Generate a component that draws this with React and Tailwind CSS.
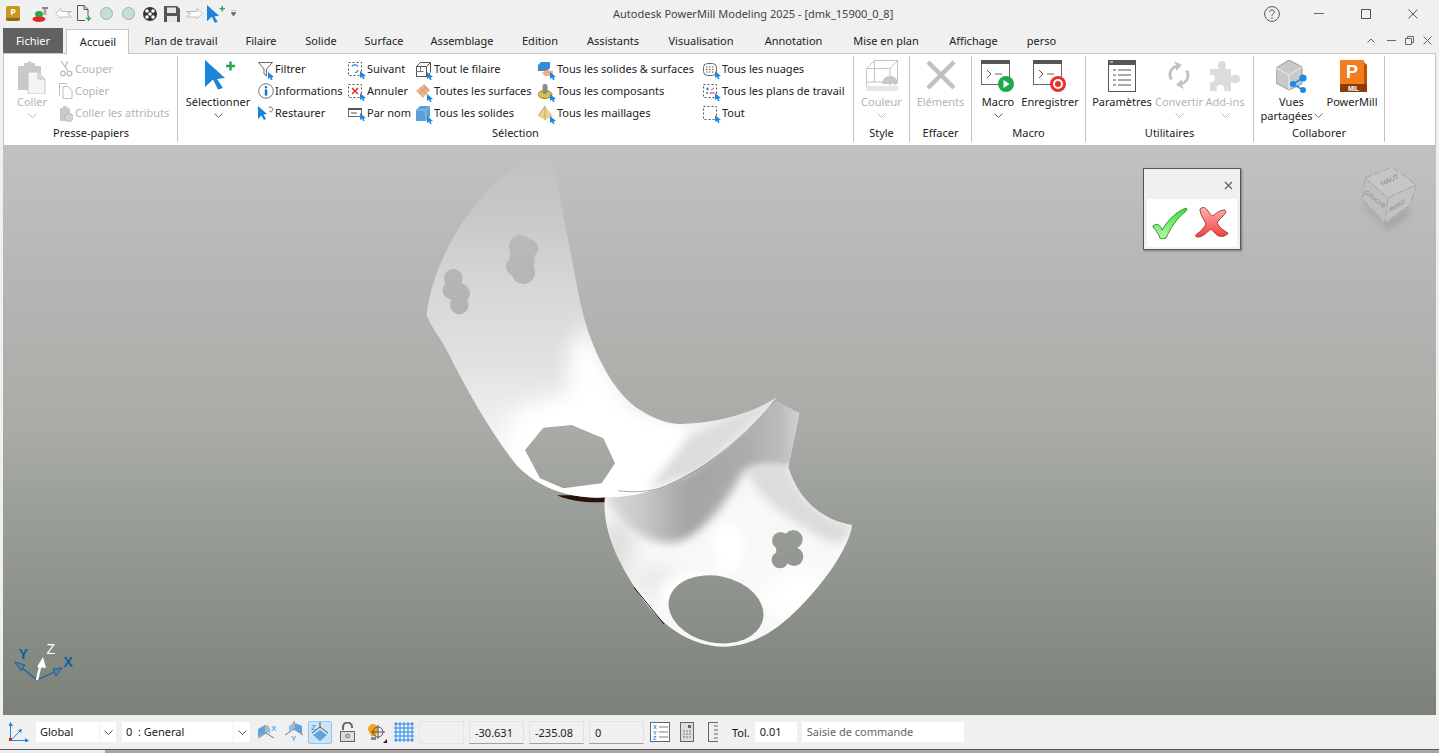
import React from "react";

const Pt = () => (
  <svg width="7" height="8" viewBox="0 0 7 8" className="absolute right-[0px] bottom-[-3px]">
    <path d="M0 0L6 5L3.6 5.4L4.6 8L3 8L2 5.8L0 7Z" fill="#1e88e5" />
  </svg>
);

const Cursor = ({ s = 1 }) => (
  <svg width={30 * s} height={30 * s} viewBox="0 0 30 30">
    <path d="M0 0L20 18L12 19L18 28L13 29.5L8 19.5L0 27Z" fill="#1a84d8" />
    <path d="M21 6h9M25.5 1.5v9" stroke="#22a84a" strokeWidth="2.4" fill="none" />
  </svg>
);

const Chev = ({ c = "#777" }) => (
  <svg width="9" height="5" viewBox="0 0 9 5"><path d="M.5.5L4.5 4.5L8.5.5" stroke={c} fill="none" /></svg>
);

const Clipboard = () => (
  <svg width="30" height="34" viewBox="0 0 30 34">
    <path d="M1 6h6V3h3l2-2h1l2 2h3v3h6v24H1Z" fill="#c9c9c9" />
    <path d="M11 12h10l7 7v15H11Z" fill="#f4f4f4" stroke="#c4c4c4" />
    <path d="M21 12v7h7" fill="#ddd" stroke="#c4c4c4" />
  </svg>
);

const g = "#bdbdbd";
const Ico = {
  cut: <svg width="14" height="16" viewBox="0 0 14 16"><path d="M2 0L9 10M9 0L6 6" stroke={g} strokeWidth="1.3" fill="none" /><circle cx="4" cy="12.5" r="2.3" stroke={g} fill="none" strokeWidth="1.3" /><circle cx="10.5" cy="12.5" r="2.3" stroke={g} fill="none" strokeWidth="1.3" /></svg>,
  copy: <svg width="14" height="16" viewBox="0 0 14 16"><path d="M.5 12.5V.5H7L8 2" stroke={g} fill="none" /><path d="M4 3.5h5l4 4v8H4Z" fill="#fff" stroke={g} /></svg>,
  attr: <svg width="14" height="17" viewBox="0 0 14 17"><path d="M1 3h3V1h4v2h3v13H1Z" fill="#c9c9c9" /><circle cx="10" cy="12.5" r="4" fill="#d5d5d5" stroke="#bbb" /></svg>,
  filter: <svg width="15" height="15" viewBox="0 0 15 15"><path d="M.5.5h14L8.500 7v7l-2.500-2V7Z" fill="#fff" stroke="#666" /></svg>,
  info: <svg width="16" height="16" viewBox="0 0 16 16"><circle cx="8" cy="8" r="7.3" fill="#fff" stroke="#777" /><circle cx="8" cy="4.3" r="1.2" fill="#1673c8" /><rect x="6.8" y="6.4" width="2.4" height="6.2" fill="#1673c8" /></svg>,
  rest: <svg width="16" height="16" viewBox="0 0 16 16"><path d="M0 1L9 9L5.5 9.5L8 14L6 15L3.5 10.5L0 14Z" fill="#1a84d8" /><path d="M10.5 3a2.4 2.4 0 1 1 1 3.6" stroke="#777" fill="none" /></svg>,
  next: <svg width="14" height="14" viewBox="0 0 14 14"><rect x=".5" y=".5" width="13" height="13" fill="none" stroke="#555" strokeDasharray="2 2" /><path d="M4 4a4 4 0 0 1 6 .5M10 8a3 3 0 0 1-3 2.500" stroke="#1a84d8" fill="none" strokeWidth="1.2" /></svg>,
  undo: <svg width="14" height="14" viewBox="0 0 14 14"><rect x=".5" y=".5" width="13" height="13" fill="none" stroke="#555" strokeDasharray="2 2" /><path d="M4 4l6 6M10 4l-6 6" stroke="#e02020" strokeWidth="1.4" /></svg>,
  name: <svg width="14" height="10" viewBox="0 0 14 10"><rect x=".5" y=".5" width="13" height="8" fill="#fff" stroke="#666" /><rect x="0" y="0" width="14" height="2" fill="#555" /><path d="M3 5h6" stroke="#555" /></svg>,
  wire: <svg width="15" height="15" viewBox="0 0 15 15"><path d="M.5 4.500h10v10H.5ZM.5 4.500l4-4h10v10l-4 4M10.5 4.500l4-4" fill="none" stroke="#555" /><path d="M4.500 4.500v5h-4M4.500 9.500h3" stroke="#777" fill="none" /></svg>,
  surf: <svg width="15" height="15" viewBox="0 0 15 15"><path d="M0 7L8 0L14 6L7 14Z" fill="#eab58c" /><path d="M4 3.500l7 7M8 1l5 6M3 10l7-7" stroke="#d08a58" strokeWidth=".8" /></svg>,
  solid: <svg width="14" height="15" viewBox="0 0 14 15"><path d="M0 4L4 0H14V10L10 15H0Z" fill="#5a9fd9" /><path d="M0 4H10V15M10 4L14 0" stroke="#93c3ea" fill="none" /></svg>,
  solsurf: <svg width="15" height="15" viewBox="0 0 15 15"><path d="M0 3L3 0H12V6L9 9H0Z" fill="#3a8ad4" /><path d="M4 11L8 8L15 9V14H7Z" fill="#f0ae88" /></svg>,
  comp: <svg width="15" height="15" viewBox="0 0 15 15"><ellipse cx="7" cy="10.500" rx="7" ry="4" fill="#dcc04f" stroke="#9a842a" /><rect x="4.500" y="0" width="5" height="10" rx="2" fill="#8b8b8b" /></svg>,
  mesh: <svg width="15" height="15" viewBox="0 0 15 15"><path d="M7 0L15 10L7 14L0 10Z" fill="#ead08e" /><path d="M7 0V14M7 0L0 10" stroke="#c9a964" fill="none" /></svg>,
  cloud: <svg width="14" height="13" viewBox="0 0 14 13"><rect x=".5" y=".5" width="13" height="12" rx="4" fill="#fff" stroke="#666" /><path d="M3 4h9M3 6.5h9M3 9h9" stroke="#555" strokeDasharray="1.5 1.5" /></svg>,
  plane: <svg width="14" height="14" viewBox="0 0 14 14"><rect x=".5" y=".5" width="13" height="13" fill="none" stroke="#555" strokeDasharray="2 2" /><path d="M3 5h3M4.5 3.5v3" stroke="#1a84d8" /><path d="M8 6l3-2" stroke="#27a04a" /><rect x="3" y="8" width="2" height="2" fill="#999" /><path d="M6.500 9h5" stroke="#e02020" /></svg>,
  all: <svg width="14" height="14" viewBox="0 0 14 14"><rect x=".5" y=".5" width="13" height="13" fill="none" stroke="#555" strokeDasharray="2 2" /></svg>,
};

const Small = ({ ico, box, text, dim, pt = true }) => (
  <div className="flex items-center h-[22px]">
    <div className={`relative flex items-center shrink-0 ${box}`}>
      {ico}
      {pt && <Pt />}
    </div>
    <span className={`whitespace-nowrap ${dim ? "text-[#b4b4b4]" : "text-[#222]"}`}>{text}</span>
  </div>
);

const Large = ({ w, icon, label, label2, chev, dim }) => (
  <div className={`flex flex-col items-center shrink-0 ${w}`}>
    <div className="h-[38px] pt-[4px] flex items-start justify-center">{icon}</div>
    <div className={`h-[16px] leading-[16px] whitespace-nowrap ${dim ? "text-[#b4b4b4]" : "text-[#222]"}`}>{label}</div>
    {label2 && <div className="h-[13px] -mt-[1px] leading-[13px] whitespace-nowrap flex items-center gap-[1px] text-[#222]">{label2}<Chev /></div>}
    {chev && <div className="h-[8px] mt-[1px] flex items-center justify-center"><Chev c={dim ? "#bbb" : "#666"} /></div>}
  </div>
);

const Group = ({ w, label, children }) => (
  <div className={`flex flex-col h-[86px] mt-[2px] border-r border-[#c4c4c4] shrink-0 ${w}`}>
    <div className="h-[69px] flex">{children}</div>
    <div className="h-[17px] leading-[15px] text-center text-[#222]">{label}</div>
  </div>
);

const Col = ({ w, children }) => <div className={`flex flex-col pt-[2px] shrink-0 ${w}`}>{children}</div>;

const MacroIcon = ({ rec }) => (
  <svg width="34" height="33" viewBox="0 0 34 33">
    <rect x=".5" y=".5" width="28" height="24" fill="#fff" stroke="#666" />
    <rect x="0" y="0" width="29" height="4" fill="#555" />
    <path d="M6 10l4 4l-4 4" stroke="#555" fill="none" />
    <path d="M14 14h7" stroke="#666" />
    {rec ? (
      <><circle cx="25" cy="24" r="8" fill="#ee2d2d" /><circle cx="25" cy="24" r="5" fill="#fff" /><circle cx="25" cy="24" r="3" fill="#ee2d2d" /></>
    ) : (
      <><circle cx="25" cy="24" r="8" fill="#22a84a" /><path d="M22.5 20l6 4l-6 4Z" fill="#fff" /></>
    )}
  </svg>
);

const tabs = [
  ["Plan de travail", "w-[100px]"], ["Filaire", "w-[60px]"], ["Solide", "w-[60px]"], ["Surface", "w-[66px]"],
  ["Assemblage", "w-[90px]"], ["Edition", "w-[66px]"], ["Assistants", "w-[80px]"], ["Visualisation", "w-[96px]"],
  ["Annotation", "w-[89px]"], ["Mise en plan", "w-[96px]"], ["Affichage", "w-[79px]"], ["perso", "w-[57px]"],
];

const Field = ({ w, children }) => (
  <div className={`h-[23px] leading-[22px] pl-[5px] bg-[#f0f0f0] border border-[#e2e2e2] border-b-[#a0a0a0] text-[#222] shrink-0 ${w}`}>{children}</div>
);

const Select = ({ w, cw, children }) => (
  <div className="flex h-[20px] shrink-0">
    <div className={`bg-white leading-[20px] pl-[4px] whitespace-pre text-[#222] ${w}`}>{children}</div>
    <div className={`bg-white ml-[1px] flex items-center justify-center ${cw}`}><Chev c="#555" /></div>
  </div>
);

function Model() {
  const D1 = "M80 495C95 350 200 130 410 2L455 2C470 100 495 220 520 350C535 430 545 480 560 530C585 610 640 730 720 780C760 805 800 822 840 822C940 820 1050 795 1130 742C1060 830 960 920 860 975C780 1020 700 1042 620 1042C510 1050 410 1010 350 945C280 860 205 730 140 600C115 555 90 525 80 495Z";
  const D2 = "M615 1040C700 1042 800 1020 900 960C960 920 1010 870 1040 830L1130 755L1198 790L1165 950C1190 1040 1260 1110 1356 1125C1350 1180 1290 1280 1200 1370C1160 1410 1080 1490 970 1490C870 1490 770 1420 710 1320C650 1230 605 1130 615 1040Z";
  return (
    <svg width="480" height="510" viewBox="0 0 1440 1530" className="absolute left-[397px] top-[5px]">
      <defs>
        <linearGradient id="s1" gradientUnits="userSpaceOnUse" x1="0" y1="0" x2="0" y2="1000">
          <stop offset="0" stopColor="#c0c0c0" />
          <stop offset=".2" stopColor="#c8c8c8" />
          <stop offset=".4" stopColor="#d6d6d6" />
          <stop offset=".65" stopColor="#e2e2e2" />
          <stop offset=".82" stopColor="#f0f0f0" />
          <stop offset="1" stopColor="#ffffff" />
        </linearGradient>
        <linearGradient id="cav" gradientUnits="userSpaceOnUse" x1="620" y1="0" x2="1200" y2="0">
          <stop offset="0" stopColor="#dadada" />
          <stop offset=".2" stopColor="#c6c6c6" />
          <stop offset=".42" stopColor="#a4a4a4" />
          <stop offset=".72" stopColor="#acacac" />
          <stop offset=".9" stopColor="#bcbcbc" />
          <stop offset="1" stopColor="#d2d2d2" />
        </linearGradient>
        <filter id="b1" x="-50%" y="-50%" width="200%" height="200%"><feGaussianBlur stdDeviation="30" /></filter>
        <filter id="b2" x="-50%" y="-50%" width="200%" height="200%"><feGaussianBlur stdDeviation="14" /></filter>
        <mask id="m1" maskUnits="userSpaceOnUse" x="0" y="0" width="1440" height="1530">
          <rect width="1440" height="1530" fill="#fff" />
          <g fill="#000">
            <circle cx="160" cy="385" r="28" /><circle cx="182" cy="430" r="28" /><circle cx="178" cy="465" r="28" /><circle cx="156" cy="420" r="28" /><circle cx="170" cy="425" r="30" />
            <circle cx="362" cy="290" r="35" /><circle cx="388" cy="295" r="27" /><circle cx="370" cy="367" r="35" /><circle cx="346" cy="350" r="28" /><ellipse cx="366" cy="330" rx="38" ry="50" />
            <path d="M430 833L515 825L610 865L645 940L605 1000L490 1015L420 985L375 900Z" />
          </g>
        </mask>
        <mask id="m2" maskUnits="userSpaceOnUse" x="0" y="0" width="1440" height="1530">
          <rect width="1440" height="1530" fill="#fff" />
          <g fill="#000">
            <circle cx="1142" cy="1172" r="26" /><circle cx="1180" cy="1168" r="28" /><circle cx="1182" cy="1220" r="28" /><circle cx="1140" cy="1230" r="25" /><circle cx="1160" cy="1198" r="32" />
            <ellipse cx="948" cy="1378" rx="144" ry="100" transform="rotate(12 948 1378)" />
          </g>
        </mask>
        <clipPath id="c1"><path d={D1} /></clipPath>
        <clipPath id="c2"><path d={D2} /></clipPath>
      </defs>
      <path d="M470 1036C530 1060 580 1058 625 1056L625 1036Z" fill="#2a120a" />
      <g mask="url(#m2)">
        <path d={D2} fill="#f8f8f8" />
        <g clipPath="url(#c2)">
          <ellipse cx="650" cy="1190" rx="50" ry="90" fill="#dedede" filter="url(#b1)" />
          <ellipse cx="760" cy="1290" rx="70" ry="40" fill="#e8e8e8" filter="url(#b1)" />
          <path d="M600 1010C650 1110 720 1178 810 1178C880 1178 960 1090 1030 965C1090 945 1140 950 1170 955L1210 770L1130 740L1040 820L860 970Z" fill="url(#cav)" filter="url(#b2)" />
          <path d="M1040 830L1130 755L1200 790L1170 935L1150 940L1060 920Z" fill="url(#cav)" />
          <path d="M1040 960C1090 935 1140 945 1170 960C1200 1040 1260 1110 1360 1125C1340 1190 1300 1190 1260 1160C1150 1100 1080 1050 1040 960Z" fill="#dcdcdc" filter="url(#b2)" />
          <ellipse cx="985" cy="1190" rx="45" ry="80" fill="#fff" filter="url(#b2)" />
          <ellipse cx="1200" cy="1340" rx="110" ry="80" fill="#fff" filter="url(#b1)" />
          <ellipse cx="890" cy="1330" rx="110" ry="60" fill="#fff" filter="url(#b2)" />
        </g>
      </g>
      <path d="M702 1312L792 1422" stroke="#2a120a" strokeWidth="3" />
      <g mask="url(#m1)">
        <path d={D1} fill="url(#s1)" />
        <g clipPath="url(#c1)">
          <path d="M555 520C510 580 490 660 510 730C420 750 340 770 320 820L340 920L400 1060L800 1020L860 840L700 790Z" fill="#fff" filter="url(#b1)" />
          <path d="M520 760C560 770 620 800 860 840L800 1020L420 1040L330 880Z" fill="#fff" filter="url(#b2)" />
          <path d="M870 860L1140 735L900 970L740 1020Z" fill="#dcdcdc" filter="url(#b2)" />
        </g>
        <path d="M655 1022C700 1028 740 1026 790 1012" stroke="#a8a8a8" strokeWidth="3" fill="none" />
      </g>
    </svg>
  );
}

function Triad() {
  const font = "Liberation Sans, sans-serif";
  return (
    <svg width="70" height="60" viewBox="0 0 70 60" className="absolute left-[7px] top-[490px]">
      <path d="M27 45L5 27M27 45L51 34" stroke="#1f5f9f" strokeWidth="1.2" />
      <path d="M5 27L15 30L11 36Z M52 33L43 34L46 41Z" fill="#5c7f99" stroke="#1f5f9f" />
      <path d="M27 45L31 28" stroke="#fff" strokeWidth="2.4" />
      <path d="M33 22L36 33L27 32Z" fill="#fff" />
      <text x="8.500" y="24" fontSize="14" fontWeight="700" fill="#0f5ea8" fontFamily={font}>Y</text>
      <text x="36.500" y="19" fontSize="14" fontWeight="400" fill="#fff" fontFamily={font}>Z</text>
      <text x="53.500" y="32" fontSize="14" fontWeight="700" fill="#0f5ea8" fontFamily={font}>X</text>
    </svg>
  );
}

function Cube() {
  const font = "Liberation Sans, sans-serif";
  return (
    <svg width="64" height="70" viewBox="0 0 64 70" className="absolute left-[1355px] top-[17px]">
      <defs>
        <filter id="cs" x="-30%" y="-30%" width="160%" height="160%"><feGaussianBlur stdDeviation="3" /></filter>
      </defs>
      <path d="M5 38L27 61L52 43L50 55L30 68L8 48Z" fill="#8d8d8d" opacity=".5" filter="url(#cs)" />
      <path d="M7 16L34 5L58 23L30 36Z" fill="#c6c6c6" stroke="#a4a4a4" strokeDasharray="7 3" />
      <path d="M7 16L30 36L27 61L5 38Z" fill="#c0c0c0" stroke="#a4a4a4" strokeDasharray="7 3" />
      <path d="M30 36L58 23L52 43L27 61Z" fill="#c3c3c3" stroke="#a4a4a4" strokeDasharray="7 3" />
      <text x="24" y="24" fontSize="7" fill="#858585" transform="rotate(-24 24 24)" fontFamily={font}>HAUT</text>
      <text x="6" y="31" fontSize="6" fill="#8c8c8c" transform="rotate(38 6 31)" fontFamily={font}>GAUCHE</text>
      <text x="32" y="50" fontSize="6" fill="#8c8c8c" transform="rotate(-30 32 50)" fontFamily={font}>AVANT</text>
    </svg>
  );
}

function Dialog() {
  return (
    <div className="absolute left-[1140px] top-[23px] w-[98px] h-[82px] bg-[#f0f0f0] border border-[#555] shadow-[1px_1px_2px_rgba(0,0,0,0.35)] flex flex-col">
      <div className="h-[30px] flex justify-end items-center pr-[7px] pt-[2px]">
        <svg width="9" height="9" viewBox="0 0 9 9"><path d="M1 1l7 7M8 1l-7 7" stroke="#666" strokeWidth="1.4" /></svg>
      </div>
      <div className="mx-[3px] h-[48px] bg-white flex items-center pl-[5px] gap-[7px]">
        <svg width="36" height="34" viewBox="0 0 36 34">
          <defs>
            <linearGradient id="gk" x1="0" y1="0" x2="0" y2="1"><stop offset="0" stopColor="#2fe82f" /><stop offset="1" stopColor="#b9f7a8" /></linearGradient>
            <linearGradient id="rk" x1="0" y1="0" x2="0" y2="1"><stop offset="0" stopColor="#ffb0b0" /><stop offset="1" stopColor="#fb3c3c" /></linearGradient>
          </defs>
          <path d="M1 20C4 17 8 18 10 24C16 14 24 6 34 2C35 3 35 4 34 5C24 13 18 23 14 32C11 33 9 33 8 32C6 27 4 24 1 21Z" fill="url(#gk)" stroke="#2c7d2c" strokeWidth=".9" />
        </svg>
        <svg width="34" height="34" viewBox="0 0 34 34">
          <path d="M5 3C8 0 11 2 13 5C15 8 16 9 18 10C21 7 25 4 30 4C32 6 30 8 27 11C25 13 23 15 22 17C25 22 29 25 33 27C32 30 27 31 24 30C21 29 18 25 16 23C12 26 8 31 3 31C0 31 0 29 2 28C6 25 9 22 11 18C9 13 5 9 5 3Z" fill="url(#rk)" stroke="#8a3a3a" strokeWidth=".9" />
        </svg>
      </div>
    </div>
  );
}

const sFont = "Liberation Sans, sans-serif";

export default function App() {
  return (
    <div className="w-[1439px] h-[753px] overflow-hidden flex flex-col bg-[#f0f0f0] text-[11px] text-[#222] font-['Noto_Sans',sans-serif]">
      {/* title bar */}
      <div className="h-[27px] flex items-center relative shrink-0">
        <div className="flex items-center pl-[6px] h-full">
          <div className="w-[14px] h-[15px] rounded-[2px] bg-[#c8971c] text-white text-[9px] font-bold leading-[12px] text-center border-b-[3px] border-[#8a6a10]">P</div>
          <div className="w-[26px] ml-[7px] flex justify-center">
            <svg width="16" height="16" viewBox="0 0 16 16"><ellipse cx="7" cy="13" rx="6.5" ry="3" fill="#e02525" /><ellipse cx="7" cy="8" rx="4" ry="3" fill="#2aa845" /><rect x="10" y="1" width="6" height="2" fill="#888" /><rect x="11.5" y="3" width="3" height="6" fill="#aaa" /></svg>
          </div>
          <div className="w-[20px] flex justify-center">
            <svg width="17" height="11" viewBox="0 0 17 11"><path d="M.5 5.5L6 .5V3.5H16.5L12 5.5L16.5 9H6V10.5Z" fill="#fff" stroke="#bbb" /></svg>
          </div>
          <div className="w-[22px] flex justify-center">
            <svg width="15" height="17" viewBox="0 0 15 17"><path d="M.5.5H7L11 4.5V11M.5.5V15.5H8" fill="none" stroke="#555" /><path d="M7 .5V4.5H11" fill="none" stroke="#555" /><path d="M9 13.5h5M11.5 11v5" stroke="#22a84a" strokeWidth="1.5" /></svg>
          </div>
          {[0, 1].map((i) => (
            <div key={i} className="w-[22px] flex justify-center"><div className="w-[13px] h-[13px] rounded-full bg-[#c6dfd2] border border-[#9bb5a8]" /></div>
          ))}
          <div className="w-[22px] flex justify-center">
            <svg width="14" height="14" viewBox="0 0 14 14"><circle cx="7" cy="7" r="7" fill="#333" /><circle cx="4" cy="4" r="1.8" fill="#fff" /><circle cx="10" cy="4" r="1.8" fill="#fff" /><circle cx="4" cy="10" r="1.8" fill="#fff" /><circle cx="10" cy="10" r="1.8" fill="#fff" /><circle cx="7" cy="7" r="1.8" fill="#fff" /></svg>
          </div>
          <div className="w-[22px] flex justify-center">
            <svg width="16" height="16" viewBox="0 0 16 16"><path d="M0 0H13L16 3V16H0Z" fill="#555" /><rect x="3" y="1.500" width="9" height="5.500" fill="#e6e6e6" /><rect x="3" y="10" width="10" height="6" fill="#e6e6e6" /></svg>
          </div>
          <div className="w-[22px] flex justify-center">
            <svg width="17" height="11" viewBox="0 0 17 11"><path d="M16.5 5.5L11 .5V3.5H.5L5 5.5L.5 9H11V10.5Z" fill="#fff" stroke="#bbb" /></svg>
          </div>
          <div className="w-[22px] flex justify-center"><Cursor s={0.6} /></div>
          <div className="w-[12px] flex justify-center">
            <svg width="5" height="7" viewBox="0 0 5 7"><path d="M0 0h5M0 2.5h5l-2.5 3.5Z" stroke="#666" fill="#666" strokeWidth=".6" /></svg>
          </div>
        </div>
        <div className="absolute left-[613px] top-[6px] leading-[15px] text-[#444] whitespace-nowrap">Autodesk PowerMill Modeling 2025 - [dmk_15900_0_8]</div>
        <div className="ml-auto flex items-center">
          <svg width="16" height="16" viewBox="0 0 16 16" className="mr-[34px]"><circle cx="8" cy="8" r="7.4" fill="none" stroke="#555" /><path d="M5.8 6a2.2 2.2 0 1 1 3.4 1.8C8.3 8.4 8 8.8 8 10" stroke="#555" fill="none" /><circle cx="8" cy="12" r=".8" fill="#555" /></svg>
          <svg width="10" height="1" viewBox="0 0 10 1" className="mr-[37px]"><path d="M0 .5h10" stroke="#666" /></svg>
          <svg width="10" height="10" viewBox="0 0 10 10" className="mr-[37px]"><rect x=".5" y=".5" width="9" height="9" fill="none" stroke="#555" /></svg>
          <svg width="10" height="10" viewBox="0 0 10 10" className="mr-[21px]"><path d="M.5.5l9 9M9.5.5l-9 9" stroke="#555" /></svg>
        </div>
      </div>

      {/* tabs */}
      <div className="h-[26px] flex items-start shrink-0 relative">
        <div className="ml-[3px] mt-[1px] pt-[2px] w-[60px] h-[25px] bg-[#616161] text-white flex items-center justify-center">Fichier</div>
        <div className="ml-[3px] mt-[2px] pl-[1px] w-[63px] h-[25px] bg-white border-x border-t border-[#c6c6c6] flex items-center justify-center z-10">Accueil</div>
        <div className="ml-[2px] flex h-full">
          {tabs.map(([t, w]) => (
            <div key={t} className={`flex items-center justify-center whitespace-nowrap text-[#222] pt-[2px] ${w}`}>{t}</div>
          ))}
        </div>
        <div className="ml-auto mr-[7px] h-full flex items-center gap-[6px] pt-[1px]">
          <svg width="8" height="5" viewBox="0 0 8 5" className="mr-[6px]"><path d="M.5 4.5L4 1L7.5 4.5" stroke="#666" fill="none" /></svg>
          <svg width="9" height="1" viewBox="0 0 9 1" className="mr-[3px]"><path d="M0 .5h9" stroke="#666" /></svg>
          <svg width="9" height="9" viewBox="0 0 9 9" className="mr-[3px]"><path d="M.5 2.5h6v6h-6ZM2.5 2.5v-2h6v6h-2" stroke="#666" fill="none" /></svg>
          <svg width="9" height="9" viewBox="0 0 9 9"><path d="M.5.5l8 8M8.5.5l-8 8" stroke="#666" /></svg>
        </div>
      </div>

      {/* ribbon */}
      <div className="h-[92px] mx-[3px] bg-white border-x border-t border-[#c6c6c6] flex shrink-0">
        <Group w="w-[174px] pl-[1px]" label="Presse-papiers">
          <Large w="w-[54px]" icon={<Clipboard />} label="Coller" chev dim />
          <Col w="w-[110px]">
            <Small dim pt={false} ico={Ico.cut} box="w-[16px]" text="Couper" />
            <Small dim pt={false} ico={Ico.copy} box="w-[16px]" text="Copier" />
            <Small dim pt={false} ico={Ico.attr} box="w-[16px]" text="Coller les attributs" />
          </Col>
        </Group>
        <Group w="w-[676px]" label="Sélection">
          <Large w="w-[80px]" icon={<div className="pl-[3px]"><Cursor /></div>} label="Sélectionner" chev />
          <Col w="w-[90px]">
            <Small ico={Ico.filter} box="w-[17px]" text="Filtrer" />
            <Small pt={false} ico={Ico.info} box="w-[17px]" text="Informations" />
            <Small pt={false} ico={Ico.rest} box="w-[17px]" text="Restaurer" />
          </Col>
          <Col w="w-[67px]">
            <Small ico={Ico.next} box="w-[19px]" text="Suivant" />
            <Small ico={Ico.undo} box="w-[19px]" text="Annuler" />
            <Small ico={Ico.name} box="w-[19px]" text="Par nom" />
          </Col>
          <Col w="w-[123px]">
            <Small ico={Ico.wire} box="w-[19px] pl-[1px]" text="Tout le filaire" />
            <Small ico={Ico.surf} box="w-[19px] pl-[1px]" text="Toutes les surfaces" />
            <Small ico={Ico.solid} box="w-[19px] pl-[1px]" text="Tous les solides" />
          </Col>
          <Col w="w-[165px]">
            <Small ico={Ico.solsurf} box="w-[19px]" text="Tous les solides & surfaces" />
            <Small ico={Ico.comp} box="w-[19px]" text="Tous les composants" />
            <Small ico={Ico.mesh} box="w-[19px]" text="Tous les maillages" />
          </Col>
          <Col w="w-[150px]">
            <Small ico={Ico.cloud} box="w-[19px]" text="Tous les nuages" />
            <Small ico={Ico.plane} box="w-[19px]" text="Tous les plans de travail" />
            <Small ico={Ico.all} box="w-[19px]" text="Tout" />
          </Col>
        </Group>
        <Group w="w-[56px]" label="Style">
          <Large w="w-[55px]" dim chev label="Couleur" icon={
            <svg width="32" height="33" viewBox="0 0 32 33"><path d="M.5 8.5L8.5.5H31.5V22L24 30H.5ZM.5 8.5H24V30M24 8.5L31.5.5" fill="#fff" stroke="#c4c4c4" /><path d="M8.5.5V22H.5M8.5 22H24" stroke="#c4c4c4" fill="none" /><path d="M16 24a8 8 0 0 1 16 0Z" fill="#c8c8c8" /><rect x="0" y="26" width="32" height="5" fill="#e6e6e6" /></svg>
          } />
        </Group>
        <Group w="w-[62px]" label="Effacer">
          <Large w="w-[61px]" dim label="Eléments" icon={
            <svg width="30" height="30" viewBox="0 0 30 30"><path d="M2 2L28 28M28 2L2 28" stroke="#c0c0c0" strokeWidth="4.5" /></svg>
          } />
        </Group>
        <Group w="w-[114px]" label="Macro">
          <Large w="w-[52px]" chev label="Macro" icon={<MacroIcon />} />
          <Large w="w-[52px]" label="Enregistrer" icon={<MacroIcon rec />} />
        </Group>
        <Group w="w-[168px]" label="Utilitaires">
          <Large w="w-[72px]" label="Paramètres" icon={
            <svg width="29" height="33" viewBox="0 0 29 33"><rect x=".5" y=".5" width="27" height="31" fill="#fff" stroke="#555" /><rect x="0" y="0" width="28" height="5" fill="#555" /><rect x="2" y="1.5" width="3" height="1" fill="#fff" /><path d="M5 10h3M10 10h13M5 15h3M10 15h13M5 20h3M10 20h13M5 25h3M10 25h13" stroke="#555" /></svg>
          } />
          <Large w="w-[42px]" dim chev label="Convertir" icon={
            <svg width="26" height="30" viewBox="0 0 26 30"><path d="M4 20A10 10 0 0 1 10 5L8 1L16 5L10 11L10 8A7 7 0 0 0 7 19Z" fill="#c2c2c2" /><path d="M22 10A10 10 0 0 1 16 25L18 29L10 25L16 19L16 22A7 7 0 0 0 19 11Z" fill="#c2c2c2" /></svg>
          } />
          <Large w="w-[50px]" dim chev label="Add-ins" icon={
            <svg width="32" height="32" viewBox="0 0 32 32"><path d="M1 9H10C8 5 9 1 13 1C17 1 18 5 16 9H22V16C26 14 31 14 31 19C31 24 26 24 22 22V31H15C16 27 14 25 11 25C8 25 7 27 8 31H1V22C4 23 6 21 6 18C6 15 4 14 1 15Z" fill="#dcdcdc" /></svg>
          } />
        </Group>
        <Group w="w-[131px]" label="Collaborer">
          <Large w="w-[75px]" label="Vues" label2="partagées" icon={
            <svg width="32" height="33" viewBox="0 0 32 33"><path d="M0 8L13 0L26 7V24L13 30L0 23Z" fill="#c8c8c8" stroke="#999" /><path d="M0 8L13 15L26 7M13 15V30" stroke="#eee" fill="none" /><circle cx="17" cy="24" r="3" fill="#1e88e5" /><circle cx="27" cy="18" r="3.6" fill="#1e88e5" /><circle cx="27" cy="30" r="3" fill="#1e88e5" /><path d="M17 24L27 18M17 24L27 30" stroke="#1e88e5" strokeWidth="1.5" /></svg>
          } />
          <Large w="w-[46px]" label="PowerMill" icon={
            <svg width="30" height="33" viewBox="0 0 30 33"><path d="M7 0H25L30 5V31L3 32Z" fill="#b85208" /><rect x="3" y="0" width="24" height="26" rx="1" fill="#f47c1c" /><path d="M3 24H30V32H3Z" fill="#8a3d05" /><text x="15" y="18" textAnchor="middle" fontSize="18" fontWeight="700" fill="#fff" fontFamily={sFont}>P</text><text x="16.500" y="31" textAnchor="middle" fontSize="6.500" fontWeight="700" fill="#fff" fontFamily={sFont}>MIL</text></svg>
          } />
        </Group>
      </div>

      {/* viewport */}
      <div className="h-[570px] mx-[3px] relative shrink-0 bg-gradient-to-b from-[#c1c1c1] via-[#a8aba6] to-[#7b8178] overflow-hidden">
        <Model />
        <Triad />
        <Dialog />
        <Cube />
      </div>

      {/* status */}
      <div className="h-[35px] flex items-center pl-[9px] shrink-0 border-b border-[#555]">
        <svg width="20" height="20" viewBox="0 0 20 20" className="mr-[7px]">
          <path d="M1.500 1.500V19M1 18.500H19M2 18L12 8" stroke="#1e88e5" fill="none" />
          <path d="M1.500 0L4 4H-1ZM20 18.500L16 21V16ZM13 7L9 8L12 11Z" fill="#1e88e5" />
          <rect x="0" y="16" width="3" height="3" fill="#e02020" />
        </svg>
        <Select w="w-[63px]" cw="w-[16px]">Global</Select>
        <div className="w-[6px]" />
        <Select w="w-[111px]" cw="w-[16px]">{"0  : General"}</Select>
        <div className="w-[3px]" />
        <div className="w-[27px] flex justify-center">
          <svg width="20" height="20" viewBox="0 0 20 20"><path d="M1 16L9 11L17 16M9 11V3" stroke="#777" fill="none" /><path d="M1 7L8 3V11L1 15Z" fill="#5ea3dc" /><path d="M10 3L13 6V12L10 10Z" fill="#8cc0ea" /><text x="14" y="9" fontSize="8" fill="#1e88e5" fontFamily={sFont}>X</text></svg>
        </div>
        <div className="w-[27px] flex justify-center">
          <svg width="20" height="22" viewBox="0 0 20 22"><path d="M1 14L10 8L19 14M10 8V0" stroke="#777" fill="none" /><path d="M11 2L18 5V13L11 9Z" fill="#5ea3dc" /><path d="M9 2L5 5V11L9 9Z" fill="#8cc0ea" /><text x="7" y="20" fontSize="8" fill="#1e88e5" fontFamily={sFont}>Y</text></svg>
        </div>
        <div className="w-[24px] h-[23px] mx-[1px] bg-[#cce4f7] border border-[#90c8f0] rounded-[2px] flex justify-center items-center">
          <svg width="20" height="20" viewBox="0 0 20 20"><path d="M2 11L10 5L18 11" stroke="#555" fill="none" /><path d="M10 5V0" stroke="#555" /><path d="M3 13L10 8L17 13L10 19Z" fill="#5ea3dc" /><text x="1" y="8" fontSize="8" fill="#1e88e5" fontFamily={sFont}>Z</text></svg>
        </div>
        <div className="w-[30px] flex justify-center">
          <svg width="16" height="21" viewBox="0 0 16 21"><path d="M3 8V5a4.500 4.500 0 0 1 9 0V6" stroke="#666" strokeWidth="2" fill="none" /><rect x=".5" y="9.500" width="14" height="10" fill="#ddd" stroke="#666" /><circle cx="7.500" cy="14" r="1.800" fill="none" stroke="#666" /></svg>
        </div>
        <div className="w-[27px] flex justify-center">
          <svg width="20" height="21" viewBox="0 0 20 21"><path d="M1 7a5 5 0 1 1 9 3l-1 4H4L3 11a5 5 0 0 1-2-4Z" fill="#f5a31a" /><rect x="4" y="15" width="5" height="3" fill="#888" /><circle cx="11" cy="10" r="5" fill="none" stroke="#555" /><path d="M11 3v14M4 10h14" stroke="#555" /><path d="M20 17v4h-4Z" fill="#222" /></svg>
        </div>
        <div className="w-[27px] flex justify-center">
          <svg width="20" height="20" viewBox="0 0 20 20"><path d="M0 2h20M0 6h20M0 10h20M0 14h20M0 18h20M2 0v20M6 0v20M10 0v20M14 0v20M18 0v20" stroke="#1e88e5" /></svg>
        </div>
        <div className="w-[2px]" />
        <div className="w-[45px] h-[23px] border border-[#e4e4e4] shrink-0 mr-[5px]" />
        <Field w="w-[55px] mr-[5px]">-30.631</Field>
        <Field w="w-[55px] mr-[5px]">-235.08</Field>
        <Field w="w-[55px] mr-[6px]">0</Field>
        <div className="w-[20px] h-[20px] border border-[#666] bg-white flex flex-col items-start justify-center pl-[2px] mr-[10px] shrink-0">
          <svg width="15" height="16" viewBox="0 0 15 16"><text x="0" y="5" fontSize="5.500" fontWeight="700" fill="#1e88e5" fontFamily={sFont}>X</text><text x="0" y="10.500" fontSize="5.500" fontWeight="700" fill="#1e88e5" fontFamily={sFont}>Y</text><text x="0" y="16" fontSize="5.500" fontWeight="700" fill="#1e88e5" fontFamily={sFont}>Z</text><path d="M6 3h9M6 8h9M6 13h9" stroke="#aaa" strokeWidth="1.500" /></svg>
        </div>
        <svg width="14" height="20" viewBox="0 0 14 20" className="mr-[14px] shrink-0"><rect x=".5" y=".5" width="13" height="19" fill="#ddd" stroke="#666" /><rect x="8" y="3" width="3" height="3" fill="#666" /><path d="M3 9h2M6 9h2M9 9h2M3 12h2M6 12h2M9 12h2M3 15h2M6 15h2M9 15h2" stroke="#999" strokeWidth="1.500" /></svg>
        <svg width="10" height="20" viewBox="0 0 10 20" className="mr-[14px] shrink-0"><rect x=".5" y=".5" width="12" height="19" fill="#eee" stroke="#666" /><path d="M6 4h4M6 8h4M6 12h4M6 16h4" stroke="#666" /></svg>
        <span className="text-[#111] mr-[5px] leading-none">Tol.</span>
        <div className="w-[42px] h-[20px] bg-white leading-[20px] pl-[5px] mr-[5px] shrink-0">0.01</div>
        <div className="w-[162px] h-[20px] bg-white leading-[20px] pl-[5px] text-[#666] shrink-0">Saisie de commande</div>
      </div>
      <div className="flex flex-1">
        <div className="w-[105px] bg-[#ececec]" />
        <div className="flex-1 bg-[#a6a6a6]" />
      </div>
    </div>
  );
}
